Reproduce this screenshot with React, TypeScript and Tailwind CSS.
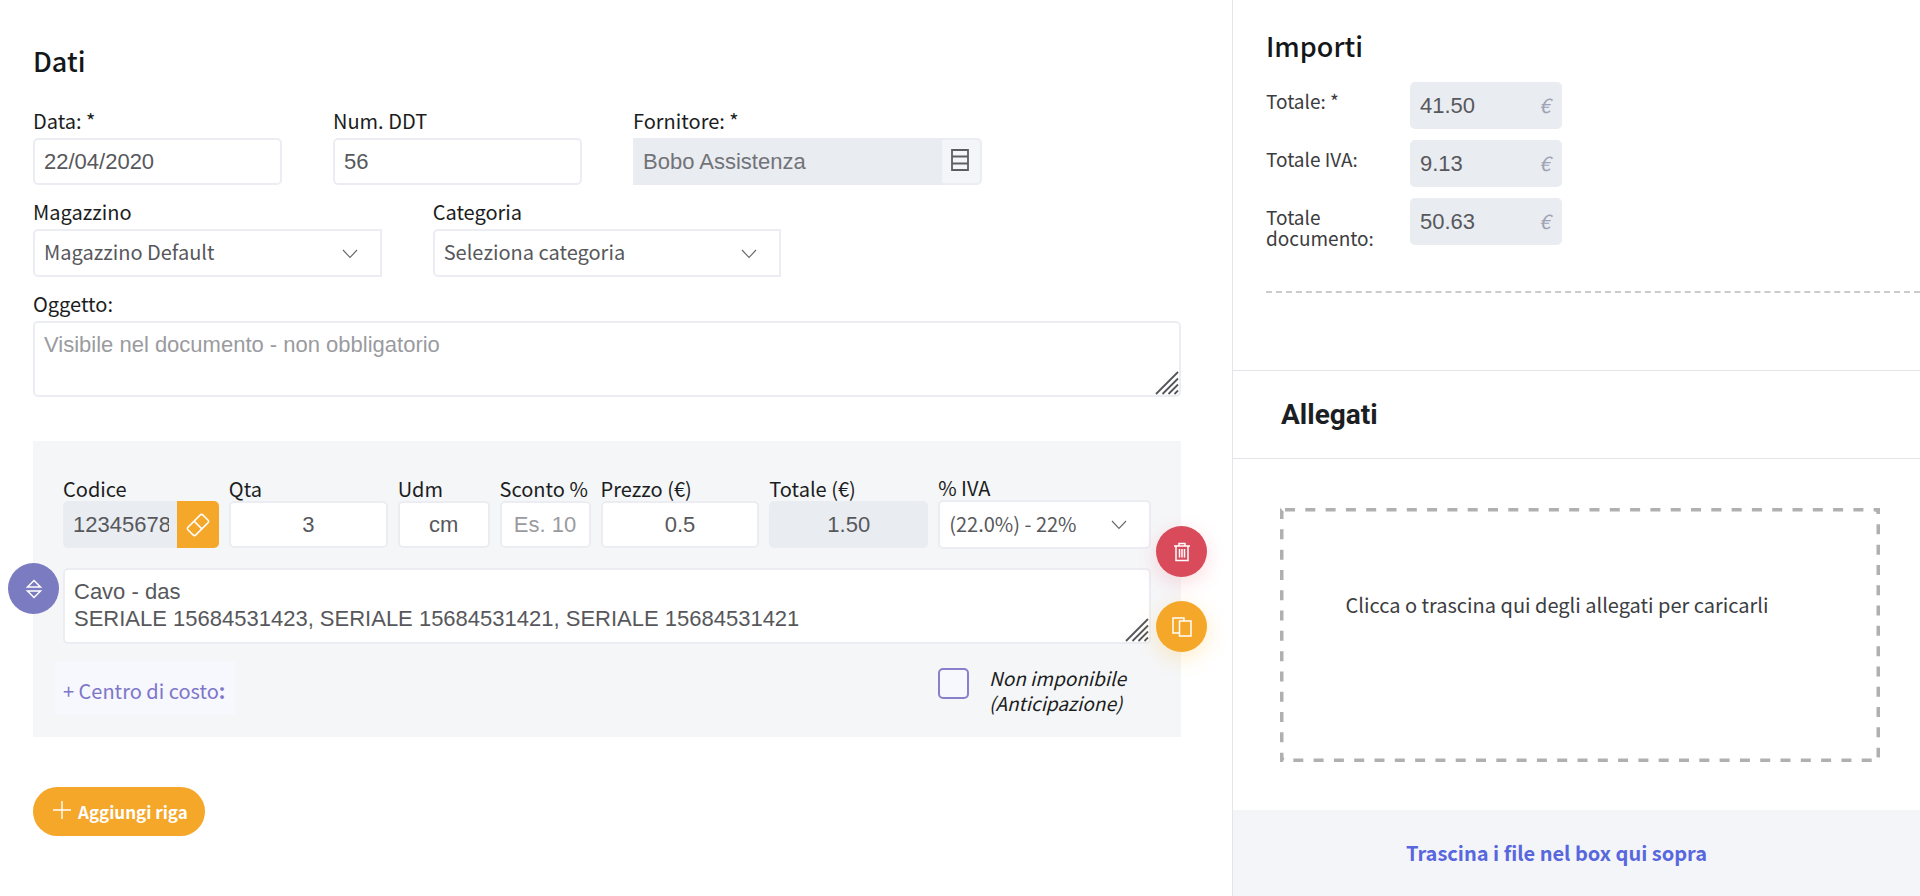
import type { ReactNode } from "react";

const sans = "font-['Noto_Sans_CJK_SC','Open_Sans',sans-serif]";
const control =
  "h-[47px] w-full min-w-0 rounded-[5px] border-2 border-[#ebedf2] bg-white px-[9px] font-['Liberation_Sans',sans-serif] text-[22px] text-[#57585c] placeholder:text-[#9a9b9f] outline-none";
const disabled =
  "h-[47px] w-full min-w-0 rounded-[5px] bg-[#e9ecf1] px-[10px] font-['Liberation_Sans',sans-serif] text-[22px] text-[#57585c] outline-none";

type FieldProps = {
  id: string;
  label: string;
  tight?: boolean;
  children: ReactNode;
};

function Field({ id, label, tight, children }: FieldProps) {
  return (
    <div className="min-w-0">
      <label
        htmlFor={id}
        className={`block whitespace-nowrap text-[20px] leading-5 text-[#1b1d21] ${tight ? "mb-0.5" : "mb-[7px]"}`}
      >
        {label}
      </label>
      {children}
    </div>
  );
}

function Select({ id, value, tall }: { id: string; value: string; tall?: boolean }) {
  return (
    <div className="relative">
      <select
        id={id}
        className={`w-full appearance-none border-2 border-[#ebedf2] bg-white pb-0.5 pl-[9px] pr-12 text-[20px] text-[#57585c] outline-none ${tall ? "h-[49px] rounded-[5px]" : "h-12 rounded-l-[5px]"}`}
      >
        <option>{value}</option>
      </select>
      <svg
        aria-hidden
        viewBox="0 0 16 10"
        className="pointer-events-none absolute right-6 top-5 h-[10px] w-4 fill-none stroke-[#66676b]"
      >
        <path d="M1 1l7 7.500L15 1" strokeWidth="1.1" />
      </svg>
    </div>
  );
}

type TextAreaProps = { id: string; label?: string; value?: string; placeholder?: string };

function TextArea({ id, label, value, placeholder }: TextAreaProps) {
  return (
    <div className="relative">
      <textarea
        id={id}
        aria-label={label}
        defaultValue={value}
        placeholder={placeholder}
        className="block h-[76px] w-full resize-none rounded-[5px] border-2 border-[#ebedf2] bg-white px-[9px] py-2 font-['Liberation_Sans',sans-serif] text-[22px] leading-[27px] text-[#57585c] placeholder:text-[#9a9b9f] outline-none"
      />
      <svg
        aria-hidden
        viewBox="0 0 24 24"
        className="pointer-events-none absolute bottom-[2px] right-[2px] h-6 w-6 fill-none stroke-[#55565a]"
      >
        <path d="M1 23L23 1M7.500 23L23 7.500M13.500 23L23 13.500M19.500 23L23 19.500" strokeWidth="1.8" />
      </svg>
    </div>
  );
}

const totals = [
  { id: "totale", label: "Totale: *", value: "41.50" },
  { id: "totale-iva", label: "Totale IVA:", value: "9.13" },
  { id: "totale-documento", label: "Totale documento:", value: "50.63" },
];

function ItemRow() {
  return (
    <div className="relative mt-11 bg-[#f5f6f8] px-[30px] pb-[22px] pt-[37px]">
      <div className="grid grid-cols-[156fr_159fr_92fr_91fr_159fr_159fr_213fr] items-center gap-[10px]">
        <Field id="codice" label="Codice" tight>
          <div className="flex">
            <div className="h-[47px] min-w-0 flex-1 rounded-l-[5px] bg-[#e9ecf1] pl-[10px] pr-2">
              <input
                id="codice"
                readOnly
                defaultValue="123456789"
                className="h-full w-full bg-transparent font-['Liberation_Sans',sans-serif] text-[22px] text-[#57585c] outline-none"
              />
            </div>
            <button
              aria-label="Svuota"
              className="flex h-[47px] w-[42px] shrink-0 items-center justify-center rounded-r-[5px] bg-[#f5a729]"
            >
              <svg viewBox="0 0 24 24" className="h-6 w-6 fill-none stroke-white" strokeWidth="1.500">
                <g transform="rotate(-45 12 12)">
                  <rect x="1.500" y="6.500" width="21" height="11" rx="2" />
                  <path d="M12 6.500v11" />
                </g>
              </svg>
            </button>
          </div>
        </Field>
        <Field id="qta" label="Qta" tight>
          <input id="qta" defaultValue="3" className={`${control} text-center`} />
        </Field>
        <Field id="udm" label="Udm" tight>
          <input id="udm" defaultValue="cm" className={`${control} text-center`} />
        </Field>
        <Field id="sconto" label="Sconto %" tight>
          <input id="sconto" placeholder="Es. 10" className={`${control} text-center`} />
        </Field>
        <Field id="prezzo" label="Prezzo (€)" tight>
          <input id="prezzo" defaultValue="0.5" className={`${control} text-center`} />
        </Field>
        <Field id="totale-riga" label="Totale (€)" tight>
          <input id="totale-riga" readOnly defaultValue="1.50" className={`${disabled} text-center`} />
        </Field>
        <Field id="iva" label="% IVA" tight>
          <Select id="iva" value="(22.0%) - 22%" tall />
        </Field>
      </div>

      <div className="mt-[19px]">
        <TextArea
          id="descrizione"
          label="Descrizione"
          value={"Cavo - das\nSERIALE 15684531423, SERIALE 15684531421, SERIALE 15684531421"}
        />
      </div>

      <div className="mt-[17px] flex items-start justify-between">
        <button className="-ml-2 h-[54px] bg-[#f7f7fe] pl-2 pr-[10px] pt-[6px] text-[20px] text-[#7d76c9]">
          + Centro di costo<b>:</b>
        </button>
        <label className="flex w-[213px] items-start gap-5 whitespace-nowrap pt-1 text-[19px] italic leading-[25px] text-[#1b1d21]">
          <input
            type="checkbox"
            className="mt-[3px] h-[31px] w-[31px] shrink-0 appearance-none rounded-[5px] border-2 border-[#8780cb] bg-[#f7f7fe]"
          />
          <span>
            Non imponibile
            <br />
            (Anticipazione)
          </span>
        </label>
      </div>

      {/* Round handles sitting on the edges of the row */}
      <button
        aria-label="Sposta riga"
        className="absolute -left-[25px] top-[122px] flex h-[51px] w-[51px] items-center justify-center rounded-full bg-[#7b7bc1]"
      >
        <svg viewBox="0 0 18 20" className="h-5 w-[18px] fill-none stroke-white" strokeWidth="1.500">
          <path d="M2.500 8L9 1.500 15.500 8zM2.500 12L9 18.500 15.500 12z" />
        </svg>
      </button>
      <div className="absolute -right-[26px] top-[85px] flex flex-col gap-6">
        <button
          aria-label="Elimina riga"
          className="flex h-[51px] w-[51px] items-center justify-center rounded-full bg-[#d94b5b] shadow-[0_6px_20px_rgba(240,80,100,0.2)]"
        >
          <svg viewBox="0 0 18 20" className="h-5 w-[18px] fill-none stroke-white" strokeWidth="1.500">
            <path d="M1 4h16M6 4V1.500h6V4M3 4v14.500h12V4M6.500 7v8.500M9 7v8.500M11.500 7v8.500" />
          </svg>
        </button>
        <button
          aria-label="Duplica riga"
          className="flex h-[51px] w-[51px] items-center justify-center rounded-full bg-[#f5a729] shadow-[0_6px_20px_rgba(255,184,34,0.25)]"
        >
          <svg viewBox="0 0 20 20" className="h-5 w-5 fill-none stroke-white" strokeWidth="1.500">
            <path d="M7 16H1V1h11v3M7.500 4h11.500v15H7.500z" />
          </svg>
        </button>
      </div>
    </div>
  );
}

export default function App() {
  return (
    <div className={`grid min-h-screen grid-cols-[1232fr_688fr] bg-white ${sans}`}>
      <main className="min-w-0 pb-10 pl-[33px] pr-[51px] pt-[43px]">
        <h2 className="mb-8 text-[27px] font-medium leading-9 text-[#14171a]">Dati</h2>

        <div className="flex flex-col gap-[17px]">
          <div className="grid grid-cols-[249fr_249fr_349fr_148fr] gap-[51px]">
            <Field id="data" label="Data: *">
              <input id="data" defaultValue="22/04/2020" className={control} />
            </Field>
            <Field id="num-ddt" label="Num. DDT">
              <input id="num-ddt" defaultValue="56" className={control} />
            </Field>
            <Field id="fornitore" label="Fornitore: *">
              <div className="flex">
                <input
                  id="fornitore"
                  readOnly
                  defaultValue="Bobo Assistenza"
                  className="h-[47px] min-w-0 flex-1 bg-[#e9ecf1] px-[10px] font-['Liberation_Sans',sans-serif] text-[22px] text-[#727378] outline-none"
                />
                <button
                  aria-label="Scegli fornitore"
                  className="flex h-[47px] w-10 shrink-0 items-center justify-center rounded-r-[5px] border-2 border-l-0 border-[#ebedf2] bg-[#f4f5f9] pb-1 pr-0.5"
                >
                  <svg viewBox="0 0 18 22" className="h-[22px] w-[18px] fill-none stroke-[#5d5e62]" strokeWidth="1.800">
                    <path d="M1 1h16v20H1zM1 7.500h16M1 14.500h16" />
                  </svg>
                </button>
              </div>
            </Field>
          </div>

          <div className="grid grid-cols-3 gap-[51px]">
            <Field id="magazzino" label="Magazzino">
              <Select id="magazzino" value="Magazzino Default" />
            </Field>
            <Field id="categoria" label="Categoria">
              <Select id="categoria" value="Seleziona categoria" />
            </Field>
          </div>

          <Field id="oggetto" label="Oggetto:">
            <TextArea id="oggetto" placeholder="Visibile nel documento - non obbligatorio" />
          </Field>
        </div>

        <ItemRow />

        <button className="mt-[50px] flex h-[49px] items-center gap-[7px] rounded-full bg-[#f5a729] pl-5 pr-[17px] text-[17px] font-bold text-white">
          <svg aria-hidden viewBox="0 0 18 18" className="mb-1 h-[18px] w-[18px] stroke-white" strokeWidth="1.400">
            <path d="M9 0v18M0 9h18" />
          </svg>
          Aggiungi riga
        </button>
      </main>

      <aside className="flex min-w-0 flex-col border-l border-[#e4e4ea]">
        <section className="h-[371px] border-b border-[#e4e4e8] pl-[33px] pt-7">
          <h2 className="mb-[18px] text-[27px] font-medium leading-9 text-[#14171a]">Importi</h2>
          <div className="flex flex-col gap-[11px]">
            {totals.map((t) => (
              <div key={t.id} className="flex h-[47px] items-start">
                <label htmlFor={t.id} className="w-36 pr-6 pt-2 text-[19px] leading-[21px] text-[#3c3d41]">
                  {t.label}
                </label>
                <div className="relative w-[152px]">
                  <input id={t.id} readOnly defaultValue={t.value} className={disabled} />
                  <span className="pointer-events-none absolute right-3 top-[11px] text-[20px] italic leading-6 text-[#a0a3b5]">
                    €
                  </span>
                </div>
              </div>
            ))}
          </div>
          <hr className="mt-[46px] border-0 border-t-2 border-dashed border-[#cbcbce]" />
        </section>

        <header className="flex h-[88px] items-center border-b border-[#e4e4e8] px-12">
          <h2 className="font-['Roboto',sans-serif] text-[28px] font-bold text-[#1b1e22]">Allegati</h2>
        </header>

        <div className="pb-12 pl-[47px] pr-10 pt-[49px]">
          <div className="relative flex h-[254px] items-center justify-center pb-[60px] pr-[46px] text-[20px] text-[#3c3d41]">
            <svg aria-hidden className="absolute inset-0 h-full w-full overflow-hidden">
              <rect
                width="100%"
                height="100%"
                rx="5"
                fill="none"
                stroke="#b0b0b0"
                strokeWidth="7"
                strokeDasharray="10 10.300"
              />
            </svg>
            Clicca o trascina qui degli allegati per caricarli
          </div>
        </div>

        <footer className="flex flex-1 items-center justify-center bg-[#f4f5f9] pr-10 text-[20px] font-bold text-[#5867dd]">
          Trascina i file nel box qui sopra
        </footer>
      </aside>
    </div>
  );
}
